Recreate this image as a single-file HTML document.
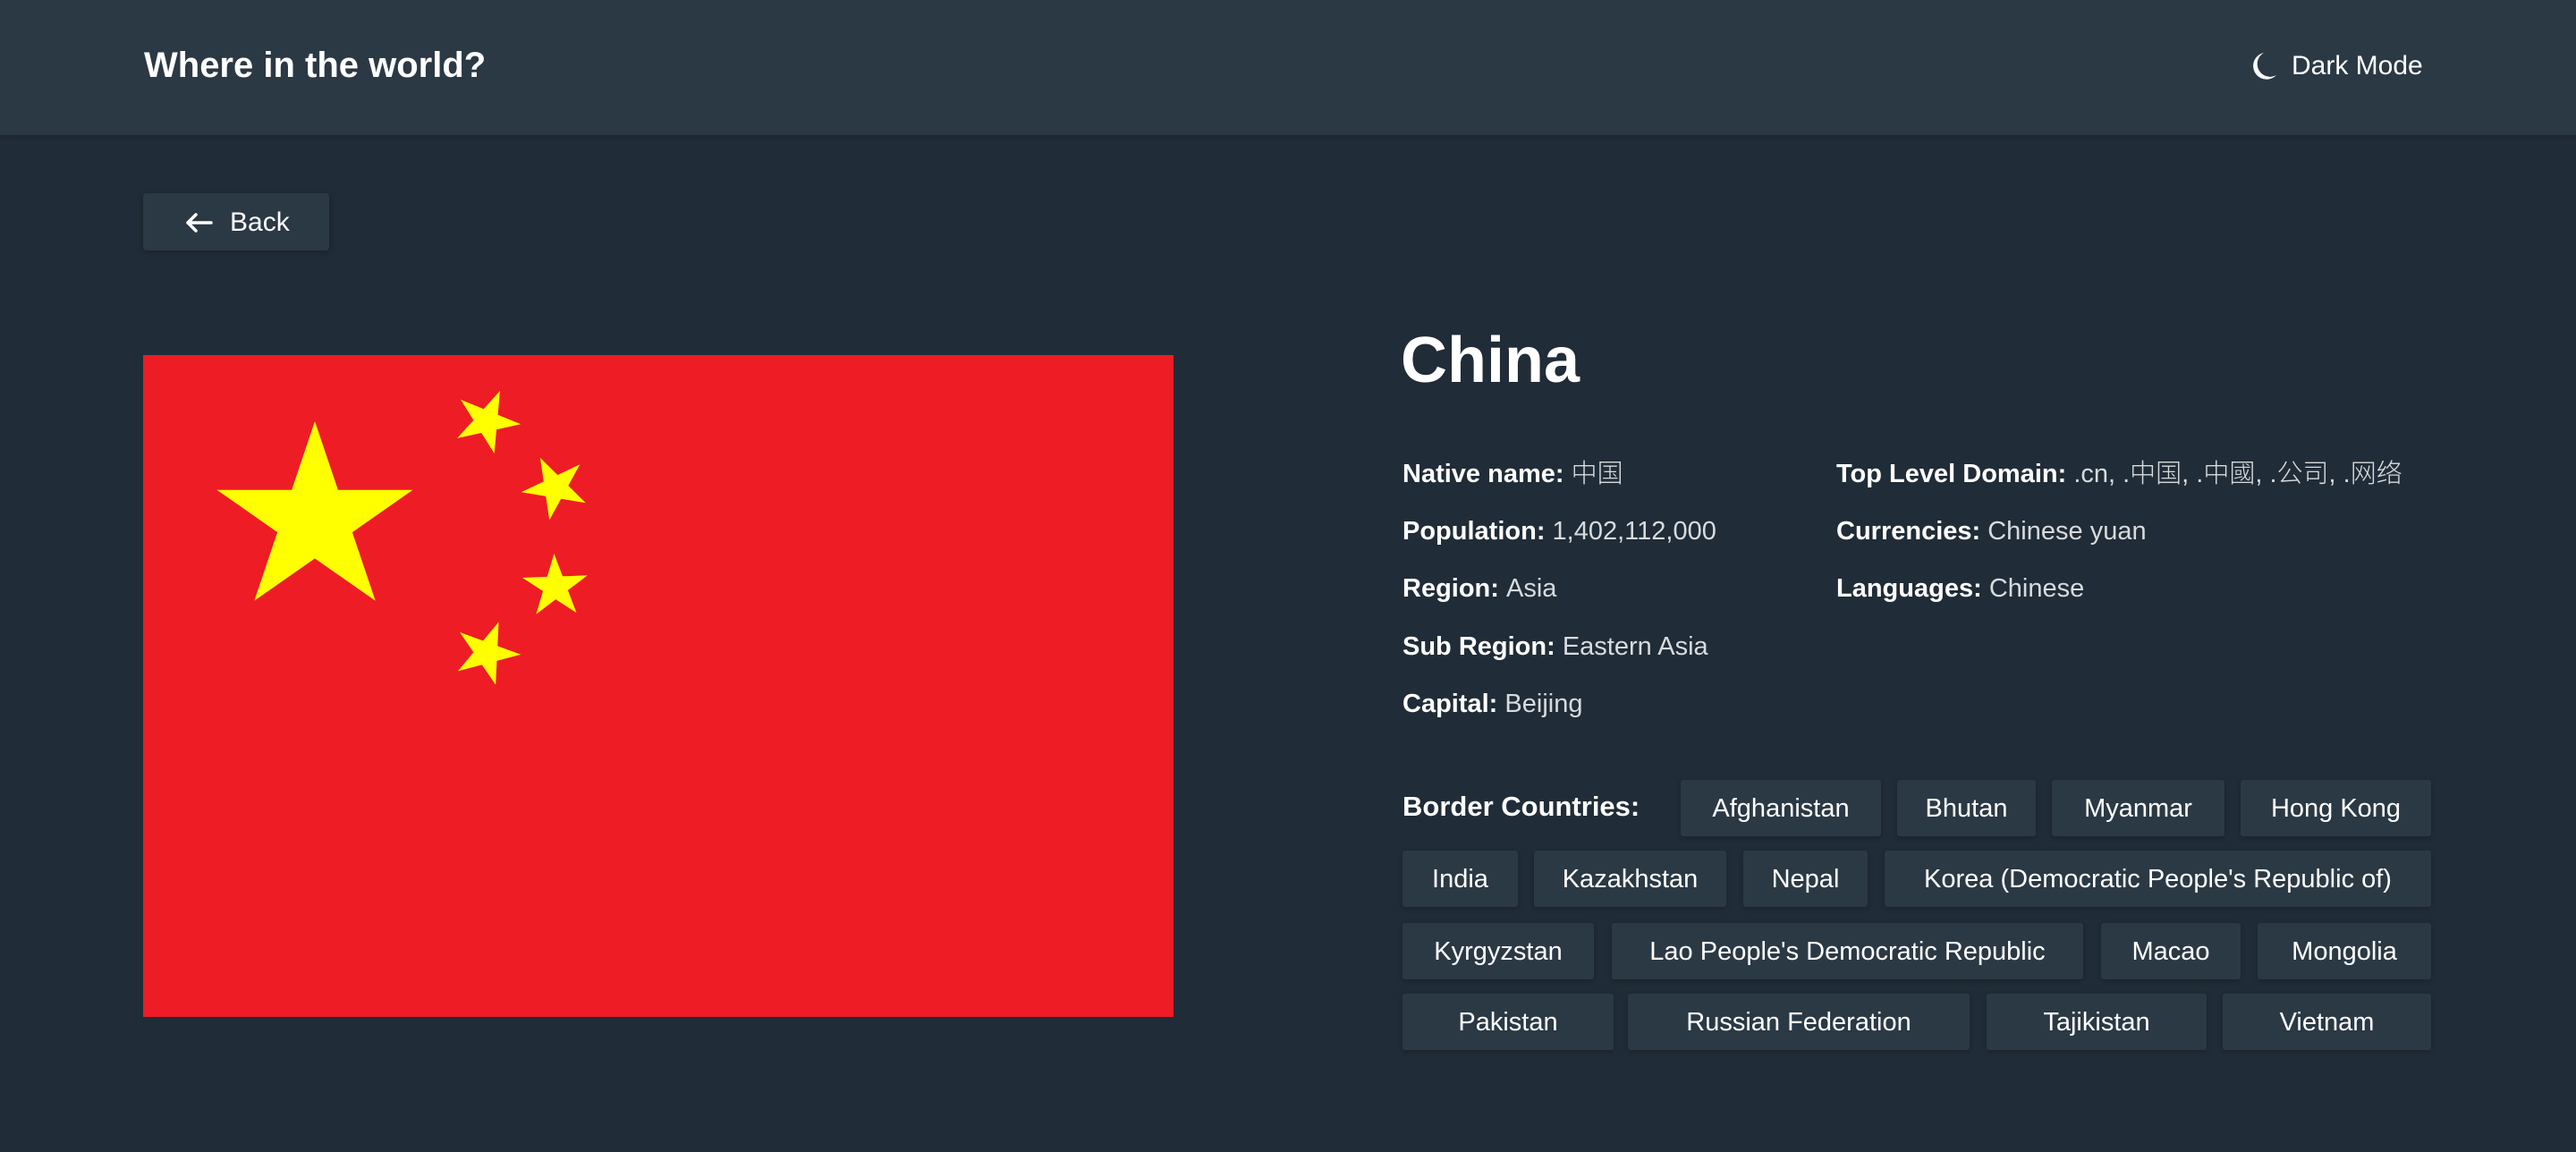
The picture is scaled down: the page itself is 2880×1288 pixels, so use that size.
<!DOCTYPE html>
<html><head><meta charset="utf-8"><style>
*{margin:0;padding:0;box-sizing:border-box}
html,body{width:2880px;height:1288px;overflow:hidden;background:#202c37;color:#fff;font-family:"Liberation Sans","Noto Sans CJK SC",sans-serif}
.hdr{position:absolute;left:0;top:0;width:2880px;height:151px;background:#2b3945;box-shadow:0 2px 6px rgba(0,0,0,.15)}
.title{position:absolute;left:161px;top:50px;font-size:40px;font-weight:bold;line-height:46px}
.dm{position:absolute;left:2562px;top:56px;font-size:30px;line-height:36px}
.moon{position:absolute;left:2516px;top:58px}
.back{position:absolute;left:160px;top:216px;width:208px;height:64px;background:#2b3945;border-radius:4px;box-shadow:0 2px 8px rgba(0,0,0,.25);font-size:30px;line-height:66px}
.back span{position:absolute;left:97px;top:0}
.back svg{position:absolute;left:46px;top:21px}
.flag{position:absolute;left:160px;top:397px}
h1{position:absolute;left:1566px;top:358px;font-size:72px;line-height:90px;font-weight:bold}
.info{position:absolute;font-size:29px;line-height:36px;white-space:nowrap}
.info b{font-weight:bold}
.info i{font-style:normal;color:#d8dbde;font-weight:300}
.lbl{position:absolute;left:1568px;top:882px;font-size:31px;line-height:40px;font-weight:bold}
.t{position:absolute;height:63px;background:#2b3945;border-radius:3px;box-shadow:0 2px 6px rgba(0,0,0,.22);font-size:29px;line-height:65px;text-align:center;white-space:nowrap}
</style></head><body>
<div class="hdr"></div>
<div class="title">Where in the world?</div>
<svg class="moon" width="30" height="32" viewBox="0 0 30 32"><path d="M15 1 A15 15 0 1 0 29 26 A12 12 0 0 1 15 1 Z" fill="#fff"/></svg>
<div class="dm">Dark Mode</div>
<div class="back"><svg width="32" height="24" viewBox="0 0 32 24"><path d="M30 12H4M13 3L4 12l9 9" stroke="#fff" stroke-width="3.5" fill="none" stroke-linecap="round" stroke-linejoin="round"/></svg><span>Back</span></div>
<svg class="flag" width="1152" height="740" viewBox="0 0 30 20" preserveAspectRatio="none">
<defs><path id="s" d="M0,-1 0.588,0.809 -0.951,-0.309 0.951,-0.309 -0.588,0.809Z" fill="#ffff00"/></defs>
<rect width="30" height="20" fill="#ee1c25"/>
<use href="#s" transform="translate(5,5) scale(3)"/>
<use href="#s" transform="translate(10,2) rotate(23.036)"/>
<use href="#s" transform="translate(12,4) rotate(45.870)"/>
<use href="#s" transform="translate(12,7) rotate(69.945)"/>
<use href="#s" transform="translate(10,9) rotate(20.660)"/>
</svg>
<h1>China</h1>
<div class="info" style="left:1568px;top:512px"><b>Native name:</b> <i>中国</i></div>
<div class="info" style="left:1568px;top:576px"><b>Population:</b> <i>1,402,112,000</i></div>
<div class="info" style="left:1568px;top:640px"><b>Region:</b> <i>Asia</i></div>
<div class="info" style="left:1568px;top:705px"><b>Sub Region:</b> <i>Eastern Asia</i></div>
<div class="info" style="left:1568px;top:769px"><b>Capital:</b> <i>Beijing</i></div>
<div class="info" style="left:2053px;top:512px"><b>Top Level Domain:</b> <i>.cn, .中国, .中國, .公司, .网络</i></div>
<div class="info" style="left:2053px;top:576px"><b>Currencies:</b> <i>Chinese yuan</i></div>
<div class="info" style="left:2053px;top:640px"><b>Languages:</b> <i>Chinese</i></div>
<div class="lbl">Border Countries:</div>
<div class="t" style="left:1879px;top:872px;width:224px">Afghanistan</div>
<div class="t" style="left:2121px;top:872px;width:155px">Bhutan</div>
<div class="t" style="left:2294px;top:872px;width:193px">Myanmar</div>
<div class="t" style="left:2505px;top:872px;width:213px">Hong Kong</div>
<div class="t" style="left:1568px;top:951px;width:129px">India</div>
<div class="t" style="left:1715px;top:951px;width:215px">Kazakhstan</div>
<div class="t" style="left:1949px;top:951px;width:139px">Nepal</div>
<div class="t" style="left:2107px;top:951px;width:611px">Korea (Democratic People's Republic of)</div>
<div class="t" style="left:1568px;top:1032px;width:214px">Kyrgyzstan</div>
<div class="t" style="left:1802px;top:1032px;width:527px">Lao People's Democratic Republic</div>
<div class="t" style="left:2349px;top:1032px;width:156px">Macao</div>
<div class="t" style="left:2524px;top:1032px;width:194px">Mongolia</div>
<div class="t" style="left:1568px;top:1111px;width:236px">Pakistan</div>
<div class="t" style="left:1820px;top:1111px;width:382px">Russian Federation</div>
<div class="t" style="left:2221px;top:1111px;width:246px">Tajikistan</div>
<div class="t" style="left:2485px;top:1111px;width:233px">Vietnam</div>
</body></html>
